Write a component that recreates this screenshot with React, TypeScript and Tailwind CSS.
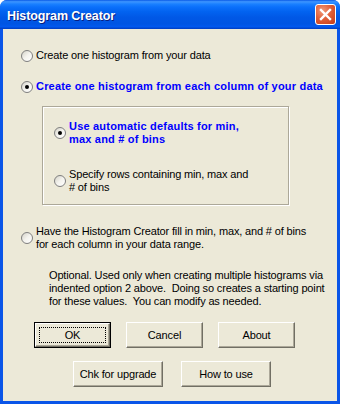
import React from "react";

function Radio({ checked }: { checked?: boolean }) {
  return (
    <span className="flex h-[12px] w-[12px] shrink-0 items-center justify-center rounded-full border border-[#7f7f7f] bg-[linear-gradient(135deg,#d4d2c8_0%,#f4f3ee_50%,#ffffff_100%)]">
      {checked && <span className="h-[4px] w-[4px] rounded-full bg-black" />}
    </span>
  );
}

function Btn({ label, w, isDefault }: { label: string; w: string; isDefault?: boolean }) {
  return (
    <div className={`${w} h-[26px] ${isDefault ? "border border-black" : ""}`}>
      <div className="flex h-full w-full items-center justify-center border border-t-white border-l-white border-r-[#716f64] border-b-[#716f64] bg-[#ece9d8] shadow-[inset_-1px_-1px_0_#aca899]">
        {isDefault ? (
          <span className="flex h-[calc(100%-6px)] w-[calc(100%-6px)] items-center justify-center border border-dotted border-black">
            {label}
          </span>
        ) : (
          label
        )}
      </div>
    </div>
  );
}

export default function App() {
  return (
    <div className="flex h-[404px] w-[340px] flex-col overflow-hidden rounded-t-[7px] bg-[#0a55e8] font-['Liberation_Sans',Arial,sans-serif] text-[11px] leading-[13px] tracking-[-0.15px] text-black">
      {/* title bar */}
      <div className="relative flex h-[29px] shrink-0 items-center bg-[linear-gradient(to_bottom,#0a5ae6_0%,#3d95ff_6%,#1a80ff_14%,#0b70fb_24%,#0263f0_40%,#0058e6_60%,#0055e3_82%,#0259ee_92%,#003cc0_100%)] pl-[7px] pt-[3px]">
        <span className="text-[12.5px] font-bold tracking-[-0.1px] text-white [text-shadow:1px_1px_0_#0a1e80]">
          Histogram Creator
        </span>
        <div className="absolute right-[4px] top-[4px] flex h-[21px] w-[21px] items-center justify-center rounded-[3px] border border-white bg-[radial-gradient(circle_at_35%_30%,#f09a7a_0%,#e0603a_45%,#c43a16_100%)]">
          <svg width="13" height="13" viewBox="0 0 13 13">
            <path d="M2 2 L11 11 M11 2 L2 11" stroke="white" strokeWidth="2.4" strokeLinecap="square" />
          </svg>
        </div>
      </div>

      {/* body */}
      <div className="mx-[3px] mb-[3px] flex-1 bg-[#ece9d8] pt-[20px]">
        <div className="ml-[18px] flex items-center gap-[3px]">
          <Radio />
          <span>Create one histogram from your data</span>
        </div>

        <div className="ml-[18px] mt-[18px] flex items-center gap-[3px]">
          <Radio checked />
          <span className="font-bold tracking-[0.2px] text-[#0000ff]">Create one histogram from each column of your data</span>
        </div>

        <div className="ml-[39px] mt-[13px] h-[99px] w-[247px] border border-[#aca899] pt-[13px] shadow-[1px_1px_0_#ffffff,inset_1px_1px_0_#ffffff]">
          <div className="ml-[11px] flex items-center gap-[3px]">
            <Radio checked />
            <span className="font-bold tracking-[0.2px] text-[#0000ff]">
              Use automatic defaults for min,
              <br />
              max and # of bins
            </span>
          </div>
          <div className="ml-[11px] mt-[22px] flex items-center gap-[3px]">
            <Radio />
            <span>
              Specify rows containing min, max and
              <br /># of bins
            </span>
          </div>
        </div>

        <div className="ml-[18px] mt-[20px] flex items-center gap-[3px]">
          <Radio />
          <span>
            Have the Histogram Creator fill in min, max, and # of bins
            <br />
            for each column in your data range.
          </span>
        </div>

        <p className="ml-[46px] mt-[18px]">
          Optional. Used only when creating multiple histograms via
          <br />
          indented option 2 above.&nbsp; Doing so creates a starting point
          <br />
          for these values.&nbsp; You can modify as needed.
        </p>

        <div className="ml-[31px] mt-[14px] flex gap-[15px]">
          <Btn label="OK" w="w-[77px]" isDefault />
          <Btn label="Cancel" w="w-[77px]" />
          <Btn label="About" w="w-[77px]" />
        </div>

        <div className="ml-[70px] mt-[13px] flex gap-[18px]">
          <Btn label="Chk for upgrade" w="w-[90px]" />
          <Btn label="How to use" w="w-[90px]" />
        </div>
      </div>
    </div>
  );
}
